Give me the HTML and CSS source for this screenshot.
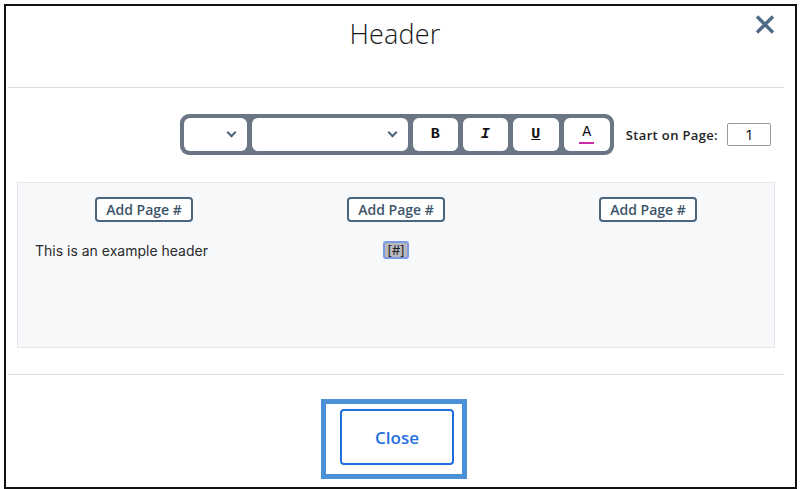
FILE: index.html
```html
<!DOCTYPE html>
<html lang="en">
<head>
    <meta charset="UTF-8">
    <title>Header</title>
    <link rel="stylesheet" href="styles.css">
</head>
<body>
    <div class="modal">
        <div class="modal-head">
            <h1 class="title">Header</h1>
            <button class="close-x" aria-label="close">
                <svg width="20" height="19" viewBox="0 0 20 19">
                    <path d="M2 1.5 L18 17.5 M18 1.5 L2 17.5" stroke="#4d6a86" stroke-width="3.4" fill="none"/>
                </svg>
            </button>
        </div>
        <div class="divider top-line"></div>

        <div class="toolbar-row">
            <div class="toolbar">
                <div class="tb-btn sel-size"><span class="chev"></span></div>
                <div class="tb-btn sel-font"><span class="chev"></span></div>
                <div class="tb-btn fmt bold">B</div>
                <div class="tb-btn fmt ital">I</div>
                <div class="tb-btn fmt under">U</div>
                <div class="tb-btn fmt color"><span class="color-a">A</span></div>
            </div>
            <label class="start-label">Start on Page:</label>
            <div class="start-input">1</div>
        </div>

        <div class="panel">
            <div class="col">
                <button class="add-btn">Add Page #</button>
                <div class="col-text left">This is an example header</div>
            </div>
            <div class="col">
                <button class="add-btn">Add Page #</button>
                <div class="col-text"><span class="page-tag">[#]</span></div>
            </div>
            <div class="col">
                <button class="add-btn">Add Page #</button>
                <div class="col-text"></div>
            </div>
        </div>

        <div class="divider bottom-line"></div>

        <div class="footer">
            <div class="focus-ring">
                <button class="close-btn">Close</button>
            </div>
        </div>
    </div>
</body>
</html>
```

FILE: styles.css
```css
body {
    margin: 0;
    background: #ffffff;
    font-family: 'Open Sans', 'Noto Sans', sans-serif;
}

.modal {
    margin: 4px 0 0 4px;
    width: 778px;
    height: 481px;
    border: 2px solid #111;
    padding-right: 11px;
    position: relative;
}

.modal-head {
    height: 81px;
    display: flex;
    justify-content: center;
    position: relative;
}

.title {
    margin: 9px 0 0 0;
    font-weight: 300;
    font-size: 27px;
    color: #1a1a1a;
    letter-spacing: 0.2px;
}

.close-x {
    position: absolute;
    top: 3px;
    right: 4px;
    background: none;
    border: none;
    padding: 0;
    width: 30px;
    height: 30px;
    display: flex;
    align-items: center;
    justify-content: center;
}

.divider {
    height: 1px;
    background: #dcdcdc;
    margin-left: 2px;
}

.toolbar-row {
    display: flex;
    align-items: center;
    justify-content: flex-end;
    margin-top: 26px;
    padding-right: 13px;
}

.toolbar {
    display: flex;
    gap: 5px;
    padding: 4px;
    background: #6b7685;
    border-radius: 9px;
}

.tb-btn {
    height: 33px;
    background: #fff;
    border-radius: 6px;
    display: flex;
    align-items: center;
    justify-content: center;
    position: relative;
    font-family: 'Liberation Mono', monospace;
    font-size: 15px;
    color: #111;
}

.sel-size { width: 63px; }
.sel-font { width: 156px; }
.fmt { width: 45px; }
.under, .color { width: 46px; }

.chev {
    position: absolute;
    right: 12px;
    top: 11px;
    width: 5px;
    height: 5px;
    border-right: 2px solid #4a6580;
    border-bottom: 2px solid #4a6580;
    transform: rotate(45deg);
}

.bold { font-weight: bold; }
.ital { font-style: italic; font-weight: bold; }
.under { text-decoration: underline; font-weight: bold; }

.color-a {
    display: inline-block;
    line-height: 16px;
    padding: 0 3px 1px;
    border-bottom: 2px solid #c82aa6;
}

.start-label {
    margin-left: 12px;
    font-size: 13px;
    font-weight: 600;
    letter-spacing: 0.35px;
    color: #1e1e1e;
}

.start-input {
    margin-left: 9px;
    width: 42px;
    height: 21px;
    border: 1px solid #9a9a9a;
    border-radius: 2px;
    font-family: 'Inter', sans-serif;
    font-size: 13px;
    color: #111;
    display: flex;
    align-items: center;
    justify-content: center;
}

.panel {
    margin: 27px 9px 0 11px;
    height: 164px;
    background: #f6f8fa;
    border: 1px solid #e3e6ea;
    display: grid;
    grid-template-columns: 1fr 1fr 1fr;
}

.col {
    display: flex;
    flex-direction: column;
    align-items: center;
    padding-top: 14px;
}

.add-btn {
    width: 98px;
    height: 25px;
    background: #fff;
    border: 2px solid #4a6580;
    border-radius: 4px;
    font-family: 'Open Sans', sans-serif;
    font-weight: 600;
    font-size: 14px;
    color: #3e5569;
    padding: 0;
}

.col-text {
    margin-top: 18px;
    height: 20px;
    display: flex;
    align-items: center;
    font-family: 'Inter', sans-serif;
    font-size: 14px;
    color: #2a2a2a;
}

.col-text.left {
    align-self: flex-start;
    padding-left: 17px;
}

.page-tag {
    background: #b9b9bd;
    border: 2px solid #7a9ae6;
    border-radius: 3px;
    padding: 0 2px;
    font-size: 13px;
    line-height: 14px;
    color: #222;
}

.bottom-line {
    margin-top: 26px;
}

.footer {
    display: flex;
    justify-content: center;
    padding-top: 24px;
    padding-right: 2px;
}

.focus-ring {
    border: 5px solid #4b91d8;
    padding: 5px 8px 9px 14px;
}

.close-btn {
    display: block;
    width: 114px;
    height: 56px;
    background: #fff;
    border: 2px solid #1f6fe0;
    border-radius: 4px;
    font-family: 'Open Sans', sans-serif;
    font-weight: 600;
    font-size: 17px;
    color: #1f6fe0;
}
```
